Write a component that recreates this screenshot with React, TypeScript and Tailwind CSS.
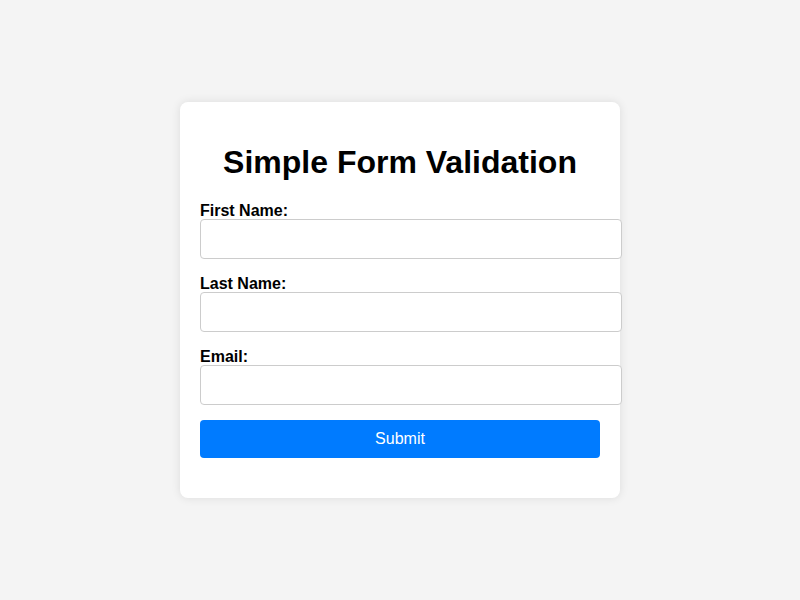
import React from "react";

export default function App() {
  const fields = [
    { id: "first", label: "First Name:", type: "text" },
    { id: "last", label: "Last Name:", type: "text" },
    { id: "email", label: "Email:", type: "email" },
  ];
  return (
    <div
      className="min-h-screen w-full bg-[#f4f4f4] flex items-center justify-center"
      style={{ fontFamily: '"Liberation Sans", Arial, sans-serif' }}
    >
      <div className="w-[440px] bg-white rounded-[8px] p-[20px] shadow-[0_0_10px_rgba(0,0,0,0.1)]">
        <h1 className="text-[32px] font-bold leading-[37px] text-center text-black mt-[22px] mb-[20px]">
          Simple Form Validation
        </h1>
        <form className="flex flex-col pb-[20px]" onSubmit={(e) => e.preventDefault()}>
          {fields.map((f) => (
            <div key={f.id} className="mb-[15px]">
              <label htmlFor={f.id} className="block h-[18px] text-[16px] font-bold leading-[20px] text-black">
                {f.label}
              </label>
              <input
                id={f.id}
                type={f.type}
                className="block w-[422px] h-[40px] px-[10px] border border-[#ccc] rounded-[4px] text-[16px] bg-white outline-none"
              />
            </div>
          ))}
          <button
            type="submit"
            className="w-full h-[38px] bg-[#007bff] text-white text-[16px] leading-[18px] rounded-[4px]"
          >
            Submit
          </button>
        </form>
      </div>
    </div>
  );
}
